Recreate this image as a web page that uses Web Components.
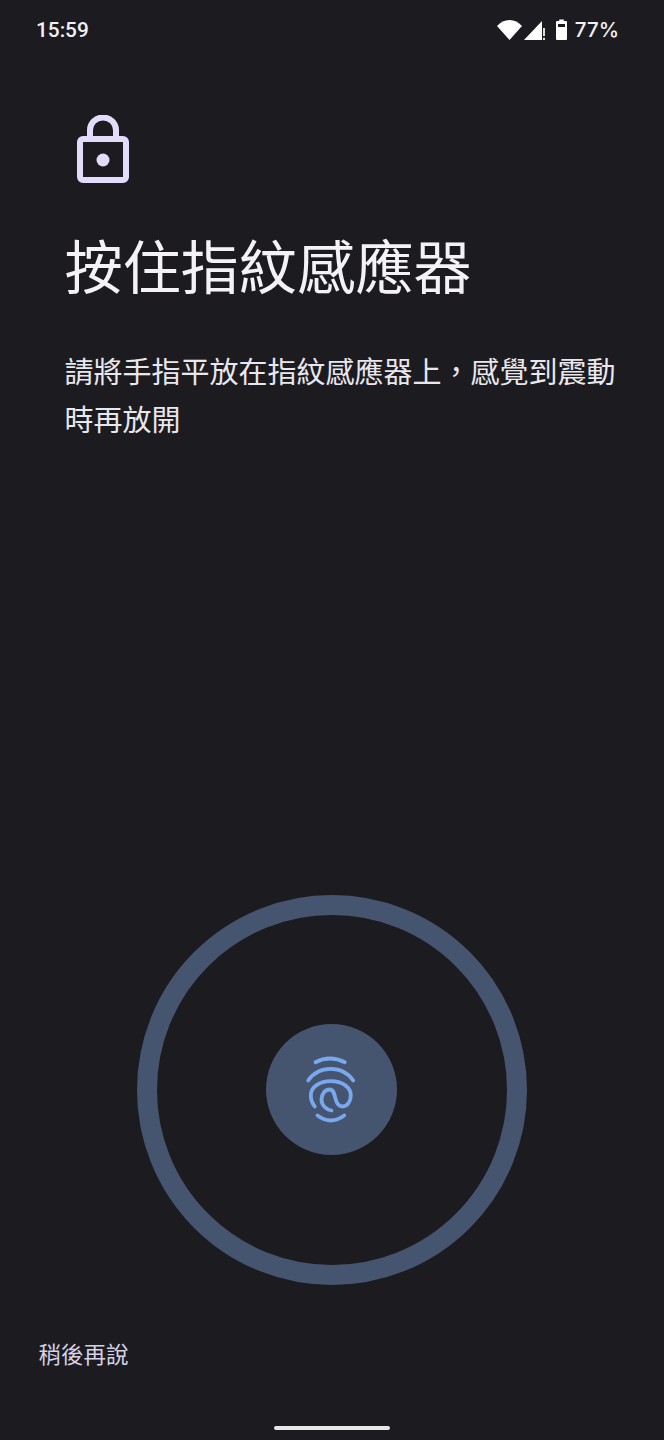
<!DOCTYPE html>
<html lang="zh-Hant">
<head>
<meta charset="utf-8">
<title>按住指紋感應器</title>
<style>
  html, body { margin: 0; padding: 0; background: #1c1b20; }
  body { width: 664px; height: 1440px; overflow: hidden; font-family: Roboto, "Noto Sans CJK TC", sans-serif; }
</style>
</head>
<body>
<enroll-screen>
  <status-bar slot="status" time="15:59" battery="77%"></status-bar>
  <lock-icon slot="icon"></lock-icon>
  <span slot="title">按住指紋感應器</span>
  <span slot="desc">請將手指平放在指紋感應器上，感覺到震動時再放開</span>
  <fingerprint-ring slot="sensor"></fingerprint-ring>
  <span slot="skip">稍後再說</span>
</enroll-screen>

<script>
class StatusBar extends HTMLElement {
  constructor() {
    super();
    this.attachShadow({ mode: "open" });
  }

  connectedCallback() {
    const time = this.getAttribute("time") || "";
    const battery = this.getAttribute("battery") || "";
    this.shadowRoot.innerHTML = `
      <style>
        :host {
          display: flex;
          align-items: center;
          justify-content: space-between;
          height: 60px;
          padding: 0 45px 0 36px;
          color: #f1f0f4;
          font-family: Roboto, sans-serif;
          font-size: 20.8px;
          font-weight: 500;
        }
        .right { display: flex; align-items: center; }
        svg { display: block; }
        .sig { margin-left: 2px; }
        .batt { margin-left: 11px; margin-right: 8px; }
        .pct { font-family: Inter, sans-serif; font-size: 20.5px; font-weight: 500; padding-bottom: 2px; }
      </style>
      <span>${time}</span>
      <div class="right">
        <svg width="25" height="22" viewBox="0 0 25 22"><path d="M12.5 21 L0 7 C3.5 3.2 7.7 1 12.5 1 C17.3 1 21.5 3.2 25 7 Z" fill="#fff"/></svg>
        <svg class="sig" width="21" height="22" viewBox="0 0 21 22"><path d="M0 21 L18 2 V21 Z" fill="#fff"/><path d="M20 9 V17 M20 18.8 V21" stroke="#fff" stroke-width="1.7" fill="none"/></svg>
        <svg class="batt" width="11" height="22" viewBox="0 0 11 22"><path d="M3.2 .5 H7.8 V2 H10 A1 1 0 0 1 11 3 V20 A1 1 0 0 1 10 21 H1 A1 1 0 0 1 0 20 V3 A1 1 0 0 1 1 2 H3.2 Z" fill="#fff"/><rect x="2" y="5" width="7" height="3" fill="#1c1b20"/></svg>
        <span class="pct">${battery}</span>
      </div>
    `;
  }
}

class LockIcon extends HTMLElement {
  constructor() {
    super();
    this.attachShadow({ mode: "open" }).innerHTML = `
      <style>
        :host { display: block; width: 52px; height: 68px; color: #e2dcfa; }
        svg { display: block; }
      </style>
      <svg width="52" height="68" viewBox="0 0 52 68" fill="none">
        <path d="M13 22 V15 A13 12.5 0 0 1 39 15 V22" stroke="currentColor" stroke-width="6"/>
        <rect x="3" y="24" width="46" height="41" rx="3" stroke="currentColor" stroke-width="6"/>
        <circle cx="26" cy="45" r="6.5" fill="currentColor"/>
      </svg>
    `;
  }
}

class FingerprintRing extends HTMLElement {
  constructor() {
    super();
    this.attachShadow({ mode: "open" }).innerHTML = `
      <style>
        :host {
          display: flex;
          align-items: center;
          justify-content: center;
          box-sizing: border-box;
          width: 390px;
          height: 390px;
          border: 20px solid #46556f;
          border-radius: 50%;
        }
        .dot {
          display: flex;
          width: 131px;
          height: 131px;
          margin: 0 1px 1px 0;
          border-radius: 50%;
          background: #46556f;
        }
        svg { display: block; }
      </style>
      <div class="dot">
        <svg width="131" height="131" viewBox="0 0 131 131" fill="none" stroke="#7aa8ee" stroke-width="3.8" stroke-linecap="round">
          <path d="M49.5 38.2 Q64 30.8 78.8 38.2"/>
          <path d="M42.2 56.5 Q50 44.8 64.7 44.8 Q79.5 44.8 87.2 56.5"/>
          <path d="M48.8 82.5 C46 79 44.8 75.5 44.8 71.5 C44.8 63 53.5 57.2 64.8 57.2 C76 57.2 84.8 63 84.8 71.5 C84.8 78 81 82.5 76.5 82.5 C72.5 82.5 70.5 79 69.5 74.8 C68.3 69.5 67.5 65.5 63.8 65.5 C59 65.5 55.5 70 55.5 75.5 C55.5 81 60 85.5 65.5 86.5"/>
          <path d="M51.5 91.5 Q64.8 101.5 78.2 91.5"/>
        </svg>
      </div>
    `;
  }
}

class EnrollScreen extends HTMLElement {
  constructor() {
    super();
    this.attachShadow({ mode: "open" }).innerHTML = `
      <style>
        :host {
          display: flex;
          flex-direction: column;
          height: 1440px;
          font-family: Roboto, "Noto Sans CJK TC", sans-serif;
          color: #fff;
        }
        .head { padding: 55px 44px 0 64.5px; flex: 1; }
        .icon { padding-left: 12.5px; }
        .title { margin: 47px 0 0; font-size: 58.2px; line-height: 78px; font-weight: 400; color: #f4f2f6; }
        .desc { margin: 41px 0 0; font-size: 29px; line-height: 48px; color: #e9e7ee; }
        .sensor { display: flex; justify-content: center; }
        .skip { padding: 54px 0 0 38.5px; font-size: 22.5px; line-height: 32px; color: #d6d1e6; }
        .nav { display: flex; justify-content: center; padding-top: 55px; height: 14px; }
        .pill { width: 116px; height: 4px; border-radius: 2px; background: #e8e8ea; }
      </style>
      <slot name="status"></slot>
      <div class="head">
        <div class="icon"><slot name="icon"></slot></div>
        <h1 class="title"><slot name="title"></slot></h1>
        <p class="desc"><slot name="desc"></slot></p>
      </div>
      <div class="sensor"><slot name="sensor"></slot></div>
      <div class="skip"><slot name="skip"></slot></div>
      <div class="nav"><div class="pill"></div></div>
    `;
  }
}

customElements.define("status-bar", StatusBar);
customElements.define("lock-icon", LockIcon);
customElements.define("fingerprint-ring", FingerprintRing);
customElements.define("enroll-screen", EnrollScreen);
</script>
</body>
</html>
